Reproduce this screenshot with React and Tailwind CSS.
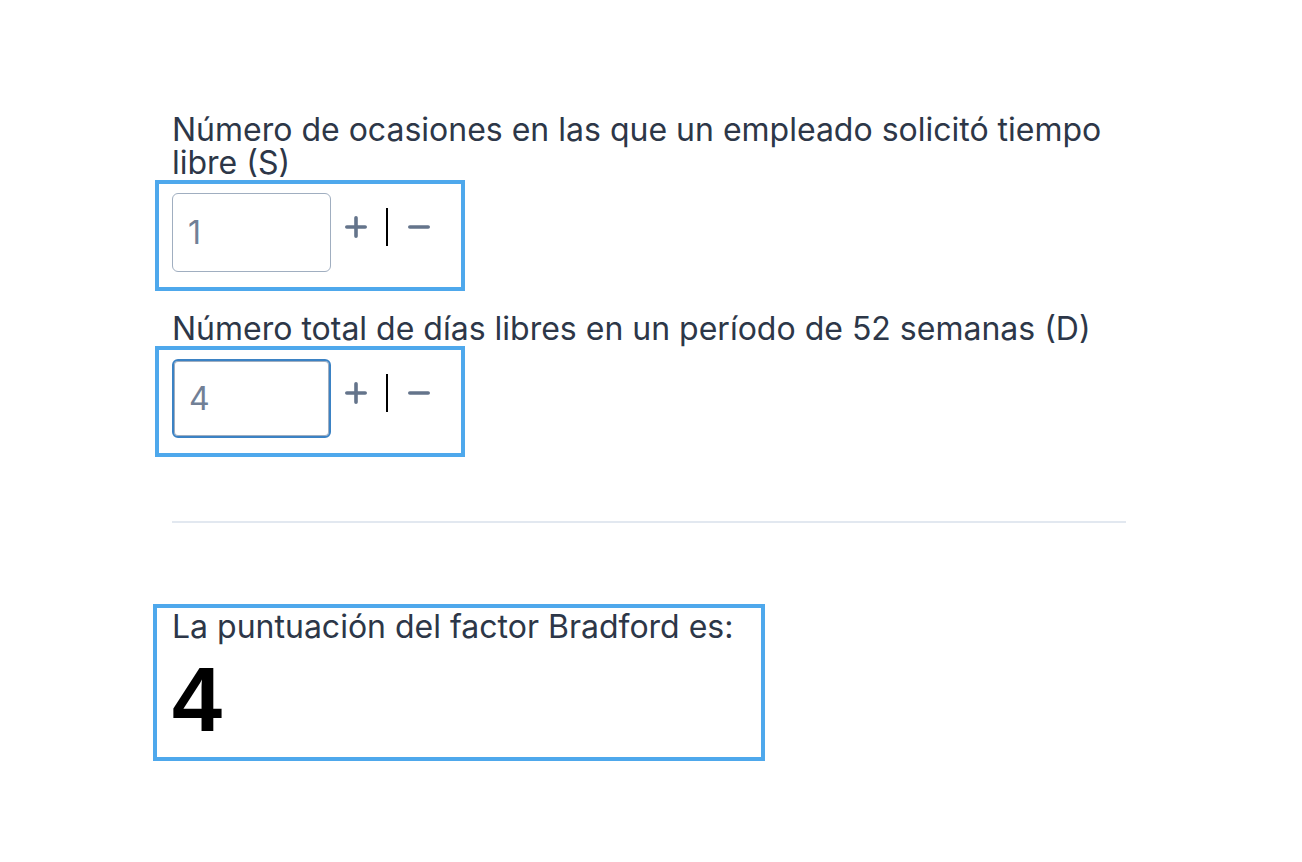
import { useState } from "react";

function PlusIcon() {
  return (
    <svg width="22" height="22" viewBox="0 0 22 22" fill="none">
      <path d="M11 1.8v18.4M1.8 11h18.4" stroke="#64748b" strokeWidth="3.6" strokeLinecap="round" />
    </svg>
  );
}

function MinusIcon() {
  return (
    <svg width="22" height="22" viewBox="0 0 22 22" fill="none">
      <path d="M1.8 11h18.4" stroke="#64748b" strokeWidth="3.6" strokeLinecap="round" />
    </svg>
  );
}

function Stepper({ value, onChange, focused }) {
  return (
    <div className="-ml-[17px] flex w-[310px] items-center border-4 border-[#4ea8ec] pb-[15px] pl-[13px] pt-[9px]">
      <input
        type="text"
        value={value}
        onChange={(e) => onChange(Number(e.target.value) || 0)}
        className={`h-[79px] w-[159px] rounded-[6px] bg-white pl-[15px] text-[32px] text-[#718096] outline-none ${
          focused
            ? "border-2 border-[#3b82c4] shadow-[inset_0_0_0_1px_#a0aec0]"
            : "border-[1.5px] border-[#a0aec0]"
        }`}
      />
      <div className="flex items-center pb-[12px]">
        <button
          type="button"
          onClick={() => onChange(value + 1)}
          className="ml-[14px] flex items-center justify-center"
        >
          <PlusIcon />
        </button>
        <div className="ml-[19px] h-[38px] w-[2px] bg-black" />
        <button
          type="button"
          onClick={() => onChange(Math.max(0, value - 1))}
          className="ml-[20px] flex items-center justify-center"
        >
          <MinusIcon />
        </button>
      </div>
    </div>
  );
}

export default function App() {
  const [s, setS] = useState(1);
  const [d, setD] = useState(4);
  const score = s * s * d;

  return (
    <div className="min-h-screen bg-white font-['Inter',sans-serif] text-[#2d3748]">
      <div className="ml-[172px] w-[954px] pt-[113px]">
        <label className="block text-[32px] leading-[33px]">
          Número de ocasiones en las que un empleado solicitó tiempo libre (S)
        </label>
        <div className="mt-[1px]">
          <Stepper value={s} onChange={setS} />
        </div>

        <label className="mt-[21px] block text-[32px] leading-[33px]">
          Número total de días libres en un período de 52 semanas (D)
        </label>
        <div className="mt-[1px]">
          <Stepper value={d} onChange={setD} focused />
        </div>

        <div className="mt-[64px] border-t-2 border-[#e2e8f0]" />

        <div className="-ml-[19px] mt-[81px] w-[612px] border-4 border-[#4ea8ec] pb-[12px] pl-[15px] pt-[2px]">
          <p className="text-[32px] leading-[33px]">La puntuación del factor Bradford es:</p>
          <p className="mt-[12px] font-['Liberation_Sans',Arial,sans-serif] text-[90px] font-bold leading-none text-black">
            {score}
          </p>
        </div>
      </div>
    </div>
  );
}
